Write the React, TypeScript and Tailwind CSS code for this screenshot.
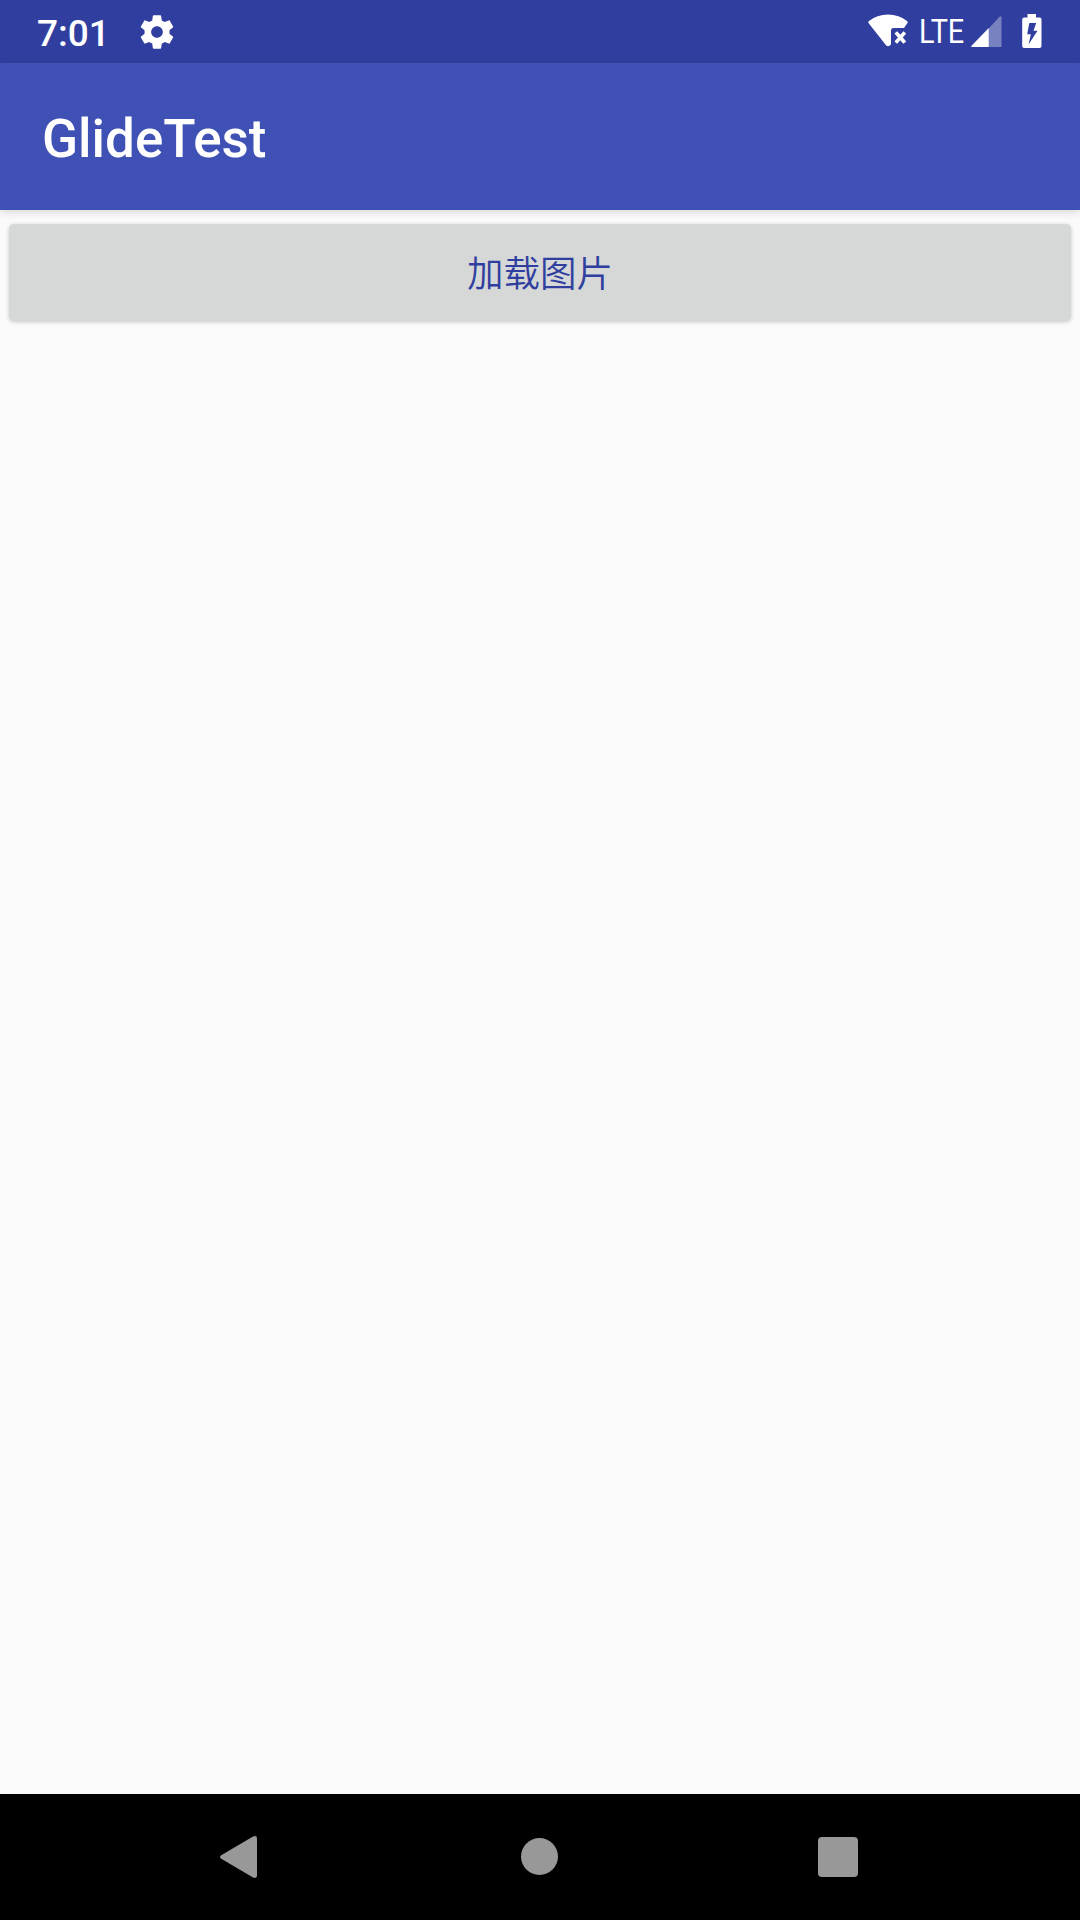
function StatusBar() {
  return (
    <div className="flex h-[63px] items-start justify-between bg-[#303f9f] pl-[37px] pr-[38px]">
      <div className="flex items-start">
        <span className="mt-[12px] w-[100px] text-[37px] font-medium leading-[44px]">7:01</span>
        <svg className="mt-[11.5px] h-[40px] w-[40px]" viewBox="0 0 24 24" fill="currentColor">
          <path d="M19.43 12.98c.04-.32.07-.64.07-.98s-.03-.66-.07-.98l2.11-1.65c.19-.15.24-.42.12-.64l-2-3.46c-.12-.22-.39-.3-.61-.22l-2.49 1c-.52-.4-1.08-.73-1.69-.98l-.38-2.65C14.46 2.18 14.25 2 14 2h-4c-.25 0-.46.18-.49.42l-.38 2.65c-.61.25-1.17.59-1.69.98l-2.49-1c-.23-.09-.49 0-.61.22l-2 3.46c-.13.22-.07.49.12.64l2.11 1.65c-.04.32-.07.65-.07.98s.03.66.07.98l-2.11 1.65c-.19.15-.24.42-.12.64l2 3.46c.12.22.39.3.61.22l2.49-1c.52.4 1.08.73 1.69.98l.38 2.65c.03.24.24.42.49.42h4c.25 0 .46-.18.49-.42l.38-2.65c.61-.25 1.17-.59 1.69-.98l2.49 1c.23.09.49 0 .61-.22l2-3.46c.12-.22.07-.49-.12-.64l-2.11-1.65zM12 15.5c-1.93 0-3.5-1.57-3.5-3.5s1.57-3.5 3.5-3.5 3.5 1.57 3.5 3.5-1.57 3.5-3.5 3.5z" />
        </svg>
      </div>

      <div className="flex items-start">
        {/* Wi-Fi without connection */}
        <svg className="mt-[14px] h-[33px] w-[40px]" viewBox="0 0 40 33" fill="currentColor">
          <path d="M.7 9.2Q-.2 8 1 7Q9 .5 20 .5T39 7Q40.2 8 39.3 9.2L36 14H25.5Q23 14 23 16.5V30.2L21.8 31.4Q20 33 18.2 31.4Z" />
          <path d="M29 19.7l6.600 7.600M35.600 19.700l-6.600 7.600" fill="none" stroke="currentColor" strokeWidth="3.600" strokeLinecap="square" />
        </svg>
        <span className="ml-[11px] mt-[11px] w-[52px] origin-left scale-x-[0.86] text-[33.5px] leading-[42px]">LTE</span>
        <svg className="mt-[16px] h-[31px] w-[31px]" viewBox="0 0 32 31" preserveAspectRatio="none" fill="currentColor">
          <path d="M31.5 1.5V31H18V12.8L29.5.8Q31.5-.5 31.5 1.5Z" fillOpacity="0.35" />
          <path d="M18.3 12V31H1.2Q-.5 31 .8 29.4Z" />
        </svg>
        <svg className="ml-[20px] mt-[14px] h-[34px] w-[20px]" viewBox="0 0 20 34" fill="currentColor">
          <path fillRule="evenodd" d="M5.5 0H14V3.5H17.5Q19.5 3.5 19.5 5.5V32Q19.5 34 17.5 34H2.2Q.2 34 .2 32V5.5Q.2 3.5 2.2 3.5H5.5ZM7.3 9H14.2L11.5 16.8H15.5L6.5 30.5L8.9 20.3H5.2Z" />
        </svg>
      </div>
    </div>
  );
}

function NavigationBar() {
  return (
    <div className="flex h-[126px] items-start justify-between bg-black pl-[220px] pr-[222px] text-[#989898]">
      <svg className="mt-[42px] h-[42px] w-[37px]" viewBox="0 0 37 42" fill="currentColor">
        <path d="M.8 19.5L33 .5Q37-1 37 2.5V39.5Q37 43 33 41.5L.8 22.5Q-.6 21 .8 19.5Z" />
      </svg>
      <div className="ml-[4px] mt-[44px] h-[37px] w-[37px] rounded-full bg-current" />
      <div className="mt-[43px] h-[40px] w-[40px] rounded-[4px] bg-current" />
    </div>
  );
}

export default function App() {
  return (
    <div className="flex h-[1920px] w-[1080px] flex-col bg-[#fafafa] font-[Roboto,'Noto_Sans_CJK_SC',sans-serif] text-white">
      <StatusBar />
      <header className="flex h-[147px] items-center bg-[#3f51b5] pl-[42px] pt-[5px] shadow-[0_2px_8px_rgba(0,0,0,0.14)]">
        <h1 className="text-[53px] font-medium leading-[62px]">GlideTest</h1>
      </header>
      <main className="flex-1 px-[9px] pt-[14px]">
        <button className="flex h-[97px] w-full items-center justify-center rounded-[5px] bg-[#d6d7d7] pt-[5px] text-[36.5px] font-[350] text-[#303f9f] shadow-[0_1px_4px_rgba(0,0,0,0.2)]">
          加载图片
        </button>
      </main>
      <NavigationBar />
    </div>
  );
}
